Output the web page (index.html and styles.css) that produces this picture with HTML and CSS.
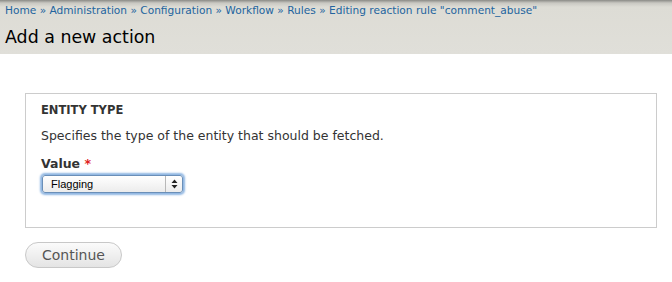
FILE: index.html
```html
<!DOCTYPE html>
<html>
<head>
<meta charset="utf-8">
<link rel="stylesheet" href="styles.css">
</head>
<body>
<div class="header">
  <div class="breadcrumb">
    <a href="#">Home</a> » <a href="#">Administration</a> » <a href="#">Configuration</a> » <a href="#">Workflow</a> » <a href="#">Rules</a> » <a href="#">Editing reaction rule "comment_abuse"</a>
  </div>
  <h1 class="title">Add a new action</h1>
</div>
<div class="content">
  <div class="fieldset">
    <div class="legend">ENTITY TYPE</div>
    <p class="desc">Specifies the type of the entity that should be fetched.</p>
    <label class="label">Value <span class="req">*</span></label>
    <div class="select">
      <span class="select-text">Flagging</span>
      <span class="select-arrows">
        <svg width="7" height="10" viewBox="0 0 7 10"><path d="M3.5 0.5 L6.5 4 L0.5 4 Z M3.5 9.5 L6.5 6 L0.5 6 Z" fill="#222"/></svg>
      </span>
    </div>
  </div>
  <button class="btn">Continue</button>
</div>
</body>
</html>
```
FILE: styles.css
```css
html, body {
  margin: 0;
  padding: 0;
  background: #fff;
  font-family: "DejaVu Sans", "Open Sans", sans-serif;
}
.header {
  height: 54px;
  background: linear-gradient(to bottom, #8a8a86 0px, #c9c8c2 3px, #dddcd5 7px, #e0dfd9 54px);
  box-sizing: border-box;
  padding: 3px 0 0 5px;
}
.breadcrumb {
  font-size: 10.6px;
  line-height: 15px;
  color: #23649e;
}
.breadcrumb a {
  color: #23649e;
  text-decoration: none;
}
.title {
  margin: 8px 0 0 0;
  font-size: 17.4px;
  font-weight: normal;
  line-height: 22px;
  color: #000;
}
.content {
  padding: 39px 15px 0 25px;
}
.fieldset {
  border: 1px solid #cccccc;
  height: 135px;
  box-sizing: border-box;
  padding: 9px 15px 0 15px;
  color: #333;
}
.legend {
  font-size: 11.5px;
  font-weight: bold;
  line-height: 14px;
  color: #333;
}
.desc {
  margin: 11px 0 0 0;
  font-size: 12.5px;
  line-height: 16px;
}
.label {
  display: block;
  margin-top: 12px;
  font-size: 12.5px;
  font-weight: bold;
  line-height: 16px;
}
.req {
  color: #e02020;
}
.select {
  margin-top: 3px;
  width: 141px;
  height: 18px;
  border: 1px solid #6a8fb8;
  border-radius: 3px;
  box-shadow: 0 0 2px 2px #8fb6e2;
  background: linear-gradient(to bottom, #ffffff, #ececec);
  display: flex;
  align-items: center;
  justify-content: space-between;
  box-sizing: border-box;
  margin-left: 1px;
}
.select-text {
  font-family: "Liberation Sans", Arial, sans-serif;
  font-size: 11px;
  color: #000;
  padding-left: 8px;
}
.select-arrows {
  border-left: 1px solid #b8b8b8;
  height: 100%;
  width: 16px;
  display: flex;
  align-items: center;
  justify-content: center;
}
.btn {
  margin-top: 14px;
  width: 97px;
  height: 26px;
  border: 1px solid #c8c8c8;
  border-radius: 13px;
  background: linear-gradient(to bottom, #fbfbfb, #e4e4e4);
  font-family: "DejaVu Sans", "Open Sans", sans-serif;
  font-size: 14px;
  color: #555;
  padding: 0;
}
```
